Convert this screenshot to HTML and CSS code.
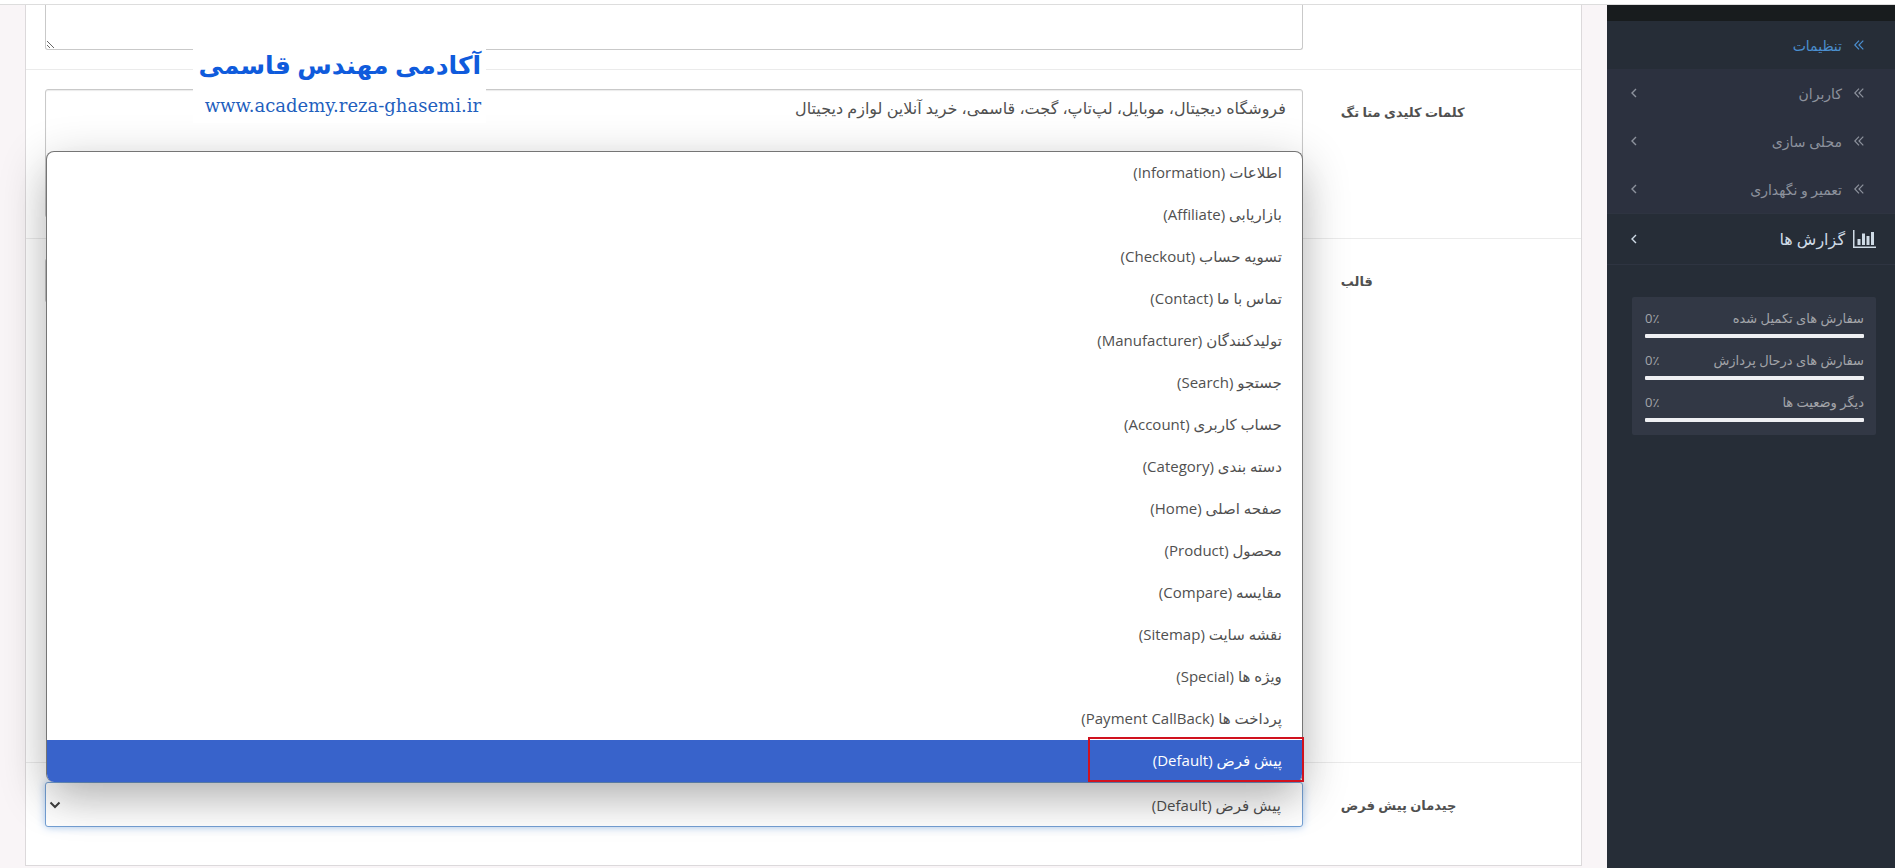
FILE: index.html
```html
<!DOCTYPE html>
<html lang="fa" dir="rtl">
<head>
<meta charset="utf-8">
<title>تنظیمات</title>
<link rel="stylesheet" href="styles.css">
</head>
<body>
<svg class="defs" aria-hidden="true">
  <symbol id="raquo" viewBox="0 0 10 10"><path d="M5 .7.8 5 5 9.300M9.300.7 5 5l4.300 4.300" fill="none" stroke="currentColor" stroke-width="1.200"/></symbol>
  <symbol id="angle" viewBox="0 0 8 12"><path d="M6 2 2 6l4 4" fill="none" stroke="currentColor" stroke-width="1.400"/></symbol>
  <symbol id="chart" viewBox="0 0 23 18"><path d="M0 0h1.500v16.500H23V18H0zM4.500 9h3v6h-3zM9 3.500h3V15H9zM13.500 6h3v9h-3zM18 2h3v13h-3z" fill="currentColor"/></symbol>
</svg>
<div class="topbar"></div>
<div class="layout">
  <nav class="sidebar">
    <div class="nav-head"></div>
    <ul class="nav">
      <li><a class="nav-link current" href="#"><svg class="raquo"><use href="#raquo"/></svg><span>تنظیمات</span></a></li>
      <li><a class="nav-link" href="#"><svg class="raquo"><use href="#raquo"/></svg><span>کاربران</span><svg class="angle"><use href="#angle"/></svg></a></li>
      <li><a class="nav-link" href="#"><svg class="raquo"><use href="#raquo"/></svg><span>محلی سازی</span><svg class="angle"><use href="#angle"/></svg></a></li>
      <li><a class="nav-link" href="#"><svg class="raquo"><use href="#raquo"/></svg><span>تعمیر و نگهداری</span><svg class="angle"><use href="#angle"/></svg></a></li>
      <li><a class="nav-link parent" href="#"><svg class="chart"><use href="#chart"/></svg><span>گزارش ها</span><svg class="angle"><use href="#angle"/></svg></a></li>
    </ul>
    <ul class="stats">
      <li><div class="stat-line"><span>سفارش های تکمیل شده</span><span>0٪</span></div><div class="bar"></div></li>
      <li><div class="stat-line"><span>سفارش های درحال پردازش</span><span>0٪</span></div><div class="bar"></div></li>
      <li><div class="stat-line"><span>دیگر وضعیت ها</span><span>0٪</span></div><div class="bar"></div></li>
    </ul>
  </nav>
  <main class="content">
    <form class="panel">
      <div class="row first">
        <div class="label-col"></div>
        <div class="field-col"><textarea class="control description" aria-label="توضیحات"></textarea></div>
      </div>
      <div class="row">
        <div class="label-col"><label for="keywords">کلمات کلیدی متا تگ</label></div>
        <div class="field-col"><textarea class="control keywords" id="keywords">فروشگاه دیجیتال، موبایل، لپ‌تاپ، گجت، قاسمی، خرید آنلاین لوازم دیجیتال</textarea></div>
      </div>
      <div class="row template">
        <div class="label-col"><label for="theme">قالب</label></div>
        <div class="field-col"><select class="control select" id="theme"></select></div>
      </div>
      <div class="row last">
        <div class="label-col"><label for="layout">چیدمان پیش فرض</label></div>
        <div class="field-col">
          <div class="picker">
            <select class="control select focused" id="layout"><option>پیش فرض (Default)</option></select>
            <ul class="menu" role="listbox" aria-label="چیدمان پیش فرض">
              <li role="option">اطلاعات (Information)&rlm;</li>
              <li role="option">بازاریابی (Affiliate)&rlm;</li>
              <li role="option">تسویه حساب (Checkout)&rlm;</li>
              <li role="option">تماس با ما (Contact)&rlm;</li>
              <li role="option">تولیدکنندگان (Manufacturer)&rlm;</li>
              <li role="option">جستجو (Search)&rlm;</li>
              <li role="option">حساب کاربری (Account)&rlm;</li>
              <li role="option">دسته بندی (Category)&rlm;</li>
              <li role="option">صفحه اصلی (Home)&rlm;</li>
              <li role="option">محصول (Product)&rlm;</li>
              <li role="option">مقایسه (Compare)&rlm;</li>
              <li role="option">نقشه سایت (Sitemap)&rlm;</li>
              <li role="option">ویژه ها (Special)&rlm;</li>
              <li role="option">پرداخت ها (Payment CallBack)&rlm;</li>
              <li role="option" aria-selected="true" class="active">پیش فرض (Default)&rlm;</li>
            </ul>
            <div class="marker"></div>
          </div>
        </div>
      </div>
    </form>
  </main>
</div>
<div class="watermark">
  <strong>آکادمی مهندس قاسمی</strong>
  <span dir="ltr">www.academy.reza-ghasemi.ir</span>
</div>
</body>
</html>
```

FILE: styles.css
```css
* { box-sizing: border-box; }
body {
  margin: 0;
  min-height: 100vh;
  display: flex;
  flex-direction: column;
  background: #f9f5f7;
  color: #505050;
  font-family: "Open Sans", "DejaVu Sans", sans-serif;
  font-size: 14px;
}
ul { list-style: none; margin: 0; padding: 0; }
.defs { display: none; }
.topbar { height: 5px; background: #fff; border-bottom: 1px solid #ddd; }
.layout { flex: 1; display: flex; }

.sidebar { width: 288px; flex: none; background: #262d37; }
.nav-head { height: 16px; background: #181c1e; }
.nav-link {
  display: flex;
  align-items: center;
  gap: 12px;
  height: 48px;
  padding: 0 31px 0 23px;
  background: #2c313f;
  color: #8d929d;
  text-decoration: none;
}
.nav-link.current { background: #262d37; color: #4b8fd0; }
.nav-link.parent {
  gap: 8px;
  height: 52px;
  padding-right: 19px;
  background: #262d37;
  border-top: 1px solid #2e3441;
  border-bottom: 1px solid #2e3441;
  color: #cfdbe6;
  font-size: 16px;
}
.raquo { width: 10px; height: 10px; }
.angle { width: 8px; height: 12px; margin-right: auto; }
.chart { width: 23px; height: 18px; }
.stats {
  margin: 32px 19px 0 25px;
  padding: 10px 12px 13px 13px;
  border-radius: 2px;
  background: #323845;
  color: #a3a5aa;
  font-size: 13px;
}
.stats li { height: 42px; padding-top: 1px; }
.stats li:last-child { height: 31px; }
.stat-line { display: flex; justify-content: space-between; height: 26px; line-height: 20px; }
.bar { height: 4px; border-radius: 1px; background: #eff0f3; }

.content { flex: 1; min-width: 0; padding: 0 25px 3px; }
.panel { background: #fff; border: 1px solid #dcd9db; border-top: 0; }
.row {
  display: grid;
  grid-template-columns: 2fr 10fr;
  padding: 19px 0 20px;
  border-top: 1px solid #ebebeb;
}
.row.first { padding-top: 0; border-top: 0; padding-bottom: 19px; }
.row.template { min-height: 524px; }
.row.last { padding-bottom: 37px; }
.label-col { padding: 11px 19px; text-align: left; font-size: 13px; font-weight: bold; line-height: 24px; }
.field-col { padding: 0 19px; }
.control {
  display: block;
  width: 100%;
  border: 1px solid #c9c9c9;
  border-radius: 3px;
  background: #fff;
  color: #505050;
  font-family: inherit;
  font-size: 15px;
  outline: 0;
}
.description { height: 45px; border-top: 0; border-radius: 0 0 3px 3px; }
.keywords { height: 129px; padding: 7px 16px; font-size: 16px; line-height: 22px; box-shadow: inset 0 1px 1px #ececec; }
.select {
  height: 45px;
  padding: 0 21px;
  appearance: none;
}
.select.focused {
  border-color: #74a0d4;
  box-shadow: 0 0 8px #a9c8ee;
  background: #fff url("data:image/svg+xml,%3Csvg xmlns='http://www.w3.org/2000/svg' width='12' height='8'%3E%3Cpath d='M1.500 1.500 6 6l4.500-4.500' fill='none' stroke='%23404040' stroke-width='2'/%3E%3C/svg%3E") no-repeat 3px center;
}
.picker { position: relative; }
.menu {
  position: absolute;
  bottom: 100%;
  left: 1px;
  right: 0;
  overflow: hidden;
  border: 1px solid #757575;
  border-bottom-width: 0;
  border-radius: 8px;
  background: #fff;
  box-shadow: 0 12px 48px rgba(0, 0, 0, .24), 0 24px 40px -8px rgba(0, 0, 0, .12);
  font-size: 15px;
}
.menu li { height: 42px; padding: 0 20px; line-height: 40px; }
.menu .active { background: #3863cb; color: #fff; }
.marker {
  position: absolute;
  right: -1px;
  bottom: 100%;
  width: 216px;
  height: 45px;
  border: 2px solid #d0121f;
}
.watermark {
  position: absolute;
  top: 43px;
  left: 193px;
  display: flex;
  flex-direction: column;
  align-items: flex-start;
  width: 293px;
  height: 80px;
  padding-right: 5px;
  background: #fff;
  color: #0f5bdc;
}
.watermark strong { font-size: 25px; line-height: 42px; white-space: nowrap; }
.watermark span { font-family: "DejaVu Serif", serif; font-size: 18px; line-height: 42px; color: #1f5fbe; }
```
